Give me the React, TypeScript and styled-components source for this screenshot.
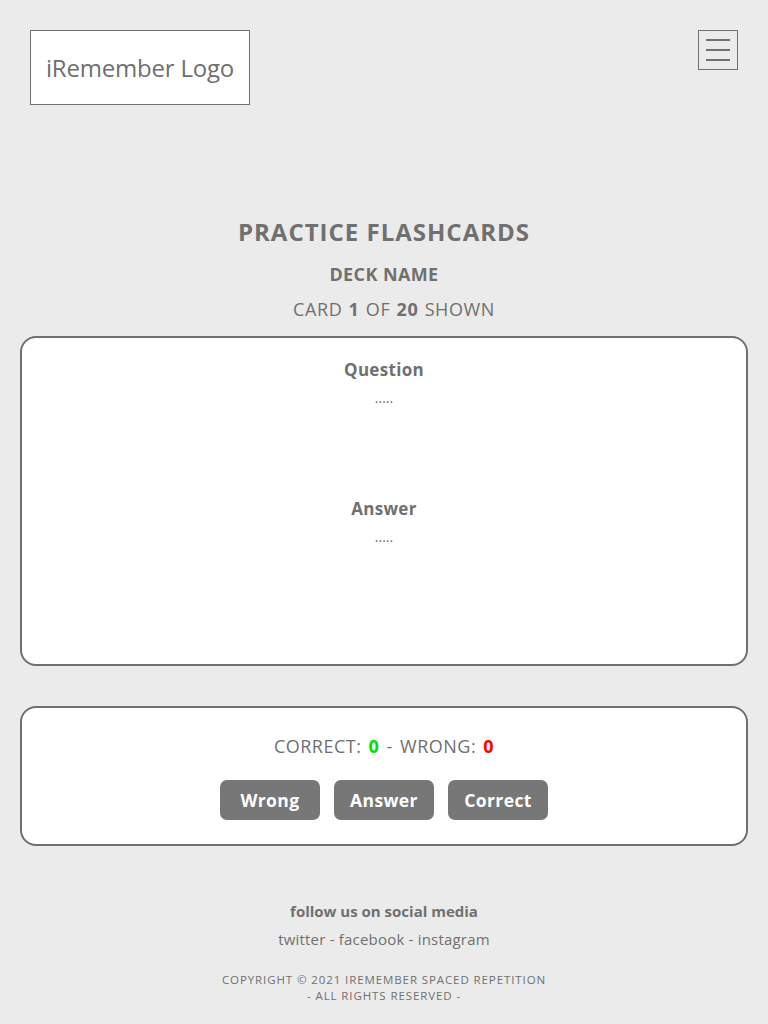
import React from 'react';
import styled, { createGlobalStyle } from 'styled-components';

const GlobalStyle = createGlobalStyle`
	* {
		box-sizing: border-box;
	}
	body {
		margin: 0;
		background: #ebebeb;
		color: #707070;
		font-family: 'Open Sans', 'Noto Sans', sans-serif;
	}
`;

const Page = styled.div`
	width: 768px;
	min-height: 1024px;
	padding: 30px 20px 0;
`;

const Header = styled.header`
	display: flex;
	justify-content: space-between;
	align-items: flex-start;
	padding: 0 10px;
`;

const Logo = styled.div`
	width: 220px;
	height: 75px;
	background: #fff;
	border: 1px solid #707070;
	display: flex;
	align-items: center;
	justify-content: center;
	font-size: 24px;
	letter-spacing: -0.2px;
	color: #6f6f6f;
`;

const Burger = styled.button`
	width: 40px;
	height: 40px;
	padding: 0;
	background: transparent;
	border: 1px solid #707070;
	display: flex;
	flex-direction: column;
	align-items: center;
	justify-content: center;
	gap: 8px;
	cursor: pointer;
	span {
		display: block;
		width: 24px;
		height: 2px;
		background: #707070;
	}
`;

const Intro = styled.section`
	margin-top: 111px;
	display: flex;
	flex-direction: column;
	align-items: center;
`;

const Title = styled.h1`
	margin: 0;
	font-size: 24px;
	font-weight: 700;
	letter-spacing: 1px;
	line-height: 32px;
`;

const DeckName = styled.h2`
	margin: 14px 0 0;
	font-size: 18px;
	font-weight: 700;
	letter-spacing: 0.4px;
	line-height: 24px;
`;

const Counter = styled.p`
	margin: 11px 0 0 20px;
	font-size: 18px;
	letter-spacing: 0.6px;
	word-spacing: 1px;
	line-height: 24px;
	b {
		font-weight: 700;
	}
`;

const Card = styled.div<{ $height: number; $top: number }>`
	margin-top: ${(p) => p.$top}px;
	height: ${(p) => p.$height}px;
	background: #fff;
	border: 2px solid #707070;
	border-radius: 16px;
	display: flex;
	flex-direction: column;
	align-items: center;
`;

const Field = styled.div`
	display: flex;
	flex-direction: column;
	align-items: center;
	height: 139px;
	padding-top: 20px;
	h3 {
		margin: 0;
		font-size: 17px;
		font-weight: 700;
		letter-spacing: 0.3px;
		line-height: 24px;
	}
	p {
		margin: 6px 0 0;
		font-size: 14px;
		line-height: 20px;
	}
`;

const Score = styled.p`
	margin: 26px 0 0;
	font-size: 18px;
	letter-spacing: 0.5px;
	word-spacing: 2px;
	line-height: 24px;
`;

const Num = styled.span<{ $color: string }>`
	color: ${(p) => p.$color};
	font-weight: 700;
`;

const Buttons = styled.div`
	display: flex;
	gap: 14px;
	margin-top: 22px;
`;

const Btn = styled.button`
	width: 100px;
	height: 40px;
	border: none;
	border-radius: 7px;
	background: #777;
	color: #fff;
	font-family: inherit;
	font-size: 17.5px;
	font-weight: 700;
	letter-spacing: 0.4px;
	cursor: pointer;
`;

const Footer = styled.footer`
	margin-top: 53px;
	display: flex;
	flex-direction: column;
	align-items: center;
	.follow {
		margin: 0;
		font-size: 15px;
		font-weight: 700;
		line-height: 24px;
	}
	.links {
		margin: 4px 0 0;
		font-size: 15px;
		letter-spacing: 0.2px;
		line-height: 24px;
	}
	.copy {
		margin: 21px 0 0;
		font-size: 11.5px;
		letter-spacing: 0.9px;
		line-height: 16px;
		text-align: center;
		text-transform: uppercase;
	}
`;

export default function App() {
	return (
		<>
			<GlobalStyle />
			<Page>
				<Header>
					<Logo>iRemember Logo</Logo>
					<Burger aria-label="menu">
						<span />
						<span />
						<span />
					</Burger>
				</Header>
				<Intro>
					<Title>PRACTICE FLASHCARDS</Title>
					<DeckName>DECK NAME</DeckName>
					<Counter>
						CARD <b>1</b> OF <b>20</b> SHOWN
					</Counter>
				</Intro>
				<Card $height={330} $top={15}>
					<Field>
						<h3>Question</h3>
						<p>.....</p>
					</Field>
					<Field>
						<h3>Answer</h3>
						<p>.....</p>
					</Field>
				</Card>
				<Card $height={140} $top={40}>
					<Score>
						CORRECT: <Num $color="#00e000">0</Num> - WRONG: <Num $color="#ff0000">0</Num>
					</Score>
					<Buttons>
						<Btn>Wrong</Btn>
						<Btn>Answer</Btn>
						<Btn>Correct</Btn>
					</Buttons>
				</Card>
				<Footer>
					<p className="follow">follow us on social media</p>
					<p className="links">twitter - facebook - instagram</p>
					<p className="copy">
						Copyright © 2021 iRemember Spaced Repetition
						<br />- All rights reserved -
					</p>
				</Footer>
			</Page>
		</>
	);
}
